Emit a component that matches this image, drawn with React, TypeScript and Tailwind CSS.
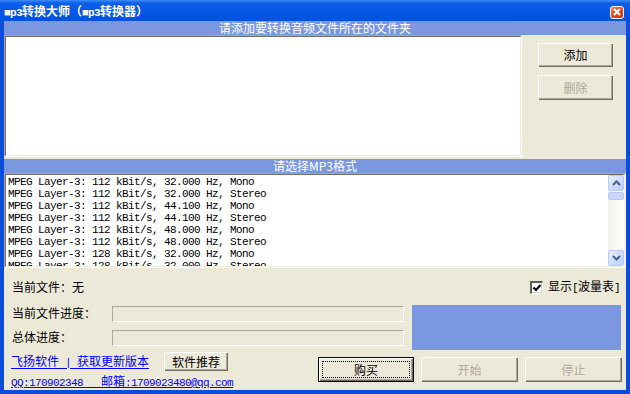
import React from "react";

const CJK = "font-['Noto_Sans_CJK_SC',sans-serif]";
const MONO = "font-['Liberation_Mono','DejaVu_Sans_Mono',monospace]";

function M({ children }: { children: React.ReactNode }) {
  return <span className={`${MONO} text-[11px] tracking-[-0.6px] whitespace-pre`}>{children}</span>;
}

const raised =
  "bg-[#ECE9D8] shadow-[inset_1px_1px_0_#ffffff,inset_-1px_-1px_0_#716f64,inset_-2px_-2px_0_#aca899]";

function Btn({
  children,
  disabled,
  className = "",
}: {
  children: React.ReactNode;
  disabled?: boolean;
  className?: string;
}) {
  return (
    <div
      className={`${raised} flex items-center justify-center text-[12px] leading-none ${
        disabled ? "text-[#ACA899]" : "text-black"
      } ${className}`}
    >
      {children}
    </div>
  );
}

function Sunken({ children, className = "" }: { children?: React.ReactNode; className?: string }) {
  return (
    <div
      className={`border-t border-l border-[#ACA899] border-b border-r border-b-white border-r-white ${className}`}
    >
      <div className="w-full h-full border-t border-l border-[#716F64] border-b border-r border-b-[#F1EFE2] border-r-[#F1EFE2] bg-white overflow-hidden relative">
        {children}
      </div>
    </div>
  );
}

function Chevron({ up }: { up?: boolean }) {
  return (
    <svg width="9" height="6" viewBox="0 0 9 6">
      <path
        d={up ? "M1 5 L4.5 1.5 L8 5" : "M1 1 L4.5 4.5 L8 1"}
        fill="none"
        stroke="#4D6185"
        strokeWidth="2"
      />
    </svg>
  );
}

const sbBtn =
  "w-[16px] h-[16px] rounded-[2px] border border-[#B7CAF5] bg-[linear-gradient(to_bottom_right,#E6EEFF,#B9CDFA)] flex items-center justify-center";

const rows = [
  "MPEG Layer-3: 112 kBit/s, 32.000 Hz, Mono",
  "MPEG Layer-3: 112 kBit/s, 32.000 Hz, Stereo",
  "MPEG Layer-3: 112 kBit/s, 44.100 Hz, Mono",
  "MPEG Layer-3: 112 kBit/s, 44.100 Hz, Stereo",
  "MPEG Layer-3: 112 kBit/s, 48.000 Hz, Mono",
  "MPEG Layer-3: 112 kBit/s, 48.000 Hz, Stereo",
  "MPEG Layer-3: 128 kBit/s, 32.000 Hz, Mono",
  "MPEG Layer-3: 128 kBit/s, 32.000 Hz, Stereo",
];

export default function App() {
  return (
    <div className={`w-[630px] h-[394px] flex flex-col bg-[#0B4DDA] ${CJK} overflow-hidden`}>
      {/* Title bar */}
      <div className="h-[21px] flex items-center bg-[linear-gradient(to_bottom,#3d8ef6_0px,#0d5fea_3px,#0657e6_12px,#0351de_21px)] pl-[4px] pr-[6px]">
        <div className="text-white font-bold text-[12px] leading-none pt-[2px] whitespace-pre">
          <M>■p3</M>转换大师（<M>■p3</M>转换器）
        </div>
        <div className="ml-auto mt-[3px] w-[14px] h-[13px] rounded-[3px] border border-white bg-[linear-gradient(to_bottom_right,#F08A67,#E0461B,#C73A12)] flex items-center justify-center">
          <svg width="8" height="8" viewBox="0 0 8 8">
            <path d="M1 1 L7 7 M7 1 L1 7" stroke="white" strokeWidth="2" />
          </svg>
        </div>
      </div>

      {/* Client */}
      <div className="flex-1 mx-[4px] mb-[4px] bg-[#ECE9D8] flex flex-col">
        <div className="h-[14px] bg-[#7B97E0] text-white text-[12px] leading-[14px] text-center">
          请添加要转换音频文件所在的文件夹
        </div>
        <div className="h-[122px] flex">
          <Sunken className="w-[518px] h-full" />
          <div className="flex-1 flex flex-col pl-[16px] pt-[8px] gap-[8px]">
            <Btn className="w-[75px] h-[24px]">添加</Btn>
            <Btn className="w-[75px] h-[25px]" disabled>
              删除
            </Btn>
          </div>
        </div>
        <div className="h-[2px]" />
        <div className="h-[14px] bg-[#7B97E0] text-white text-[12px] leading-[14px] text-center">
          请选择<span className="text-[12px]">MP3</span>格式
        </div>
        <Sunken className="h-[95px] w-full">
          <div className="flex h-full">
            <div className={`flex-1 pl-[2px] pt-[1px] ${MONO} text-[11px] tracking-[-0.6px] leading-[12px] text-black whitespace-pre overflow-hidden`}>
              {rows.map((r, i) => (
                <div key={i} className="h-[12px]">
                  {r}
                </div>
              ))}
            </div>
            <div className="w-[16px] h-full flex flex-col bg-[linear-gradient(to_right,#F3F1EC,#FEFEFB)]">
              <div className={sbBtn}>
                <Chevron up />
              </div>
              <div className="mt-[1px] h-[8px] w-[16px] rounded-[2px] border border-[#B7CAF5] bg-[#C8D8FC]" />
              <div className="flex-1" />
              <div className={sbBtn}>
                <Chevron />
              </div>
            </div>
          </div>
        </Sunken>

        {/* Bottom area */}
        <div className="flex-1 flex flex-col text-[12px] text-black">
          <div className="h-[32px] pt-[6px] flex items-center pl-[8px] pr-[6px]">
            <div className="leading-none">当前文件：无</div>
            <div className="ml-auto flex items-center">
              <div className="w-[13px] h-[13px] bg-white border-t-2 border-l-2 border-[#5E5C54] border-b border-r border-b-white border-r-white flex items-center justify-center shadow-[inset_-1px_-1px_0_#D4D0C8]">
                <svg width="8" height="8" viewBox="0 0 8 8">
                  <path d="M0.5 3.5 L3 6 L7.5 1" fill="none" stroke="black" strokeWidth="2" />
                </svg>
              </div>
              <div className="ml-[5px] leading-none whitespace-pre">
                显示<M>[</M>波量表<M>]</M>
              </div>
            </div>
          </div>
          <div className="h-[52px] flex pl-[8px]">
            <div className="flex flex-col">
              <div className="mt-[6px] flex items-center h-[16px]">
                <div className="w-[100px] leading-none -mt-[3px]">当前文件进度：</div>
                <div className="w-[292px] h-[16px] border-t border-l border-[#ACA899] border-b border-r border-b-white border-r-white" />
              </div>
              <div className="mt-[8px] flex items-center h-[16px]">
                <div className="w-[100px] leading-none -mt-[2px]">总体进度：</div>
                <div className="w-[292px] h-[16px] border-t border-l border-[#ACA899] border-b border-r border-b-white border-r-white" />
              </div>
            </div>
            <div className="ml-[8px] mt-[5px] w-[209px] h-[45px] bg-[#7B97E0]" />
          </div>
          <div className="flex-1 flex pl-[7px] pr-[4px]">
            <div className="flex flex-col">
              <div className="h-[19px] flex items-center">
                <div className="text-[#0000FF] underline underline-offset-[2px] leading-none whitespace-pre">
                  飞扬软件<M> | </M>获取更新版本
                </div>
                <Btn className="ml-[15px] w-[64px] h-[19px]">软件推荐</Btn>
              </div>
              <div className="mt-[4px] text-[#0000FF] underline underline-offset-[1px] leading-none whitespace-pre">
                <M>QQ:170902348   </M>
                <span className="text-[12px]">邮箱</span>
                <M>:1709023480@qq.com</M>
              </div>
            </div>
            <div className="ml-auto mt-[5px] flex gap-[7px]">
              <div className="w-[96px] h-[25px] border border-black">
                <div className={`${raised} w-full h-full p-[3px]`}>
                  <div className="w-full h-full border border-dotted border-black flex items-center justify-center text-[12px] leading-none">
                    购买
                  </div>
                </div>
              </div>
              <Btn className="w-[97px] h-[25px]" disabled>
                开始
              </Btn>
              <Btn className="w-[97px] h-[25px]" disabled>
                停止
              </Btn>
            </div>
          </div>
        </div>
      </div>
    </div>
  );
}
